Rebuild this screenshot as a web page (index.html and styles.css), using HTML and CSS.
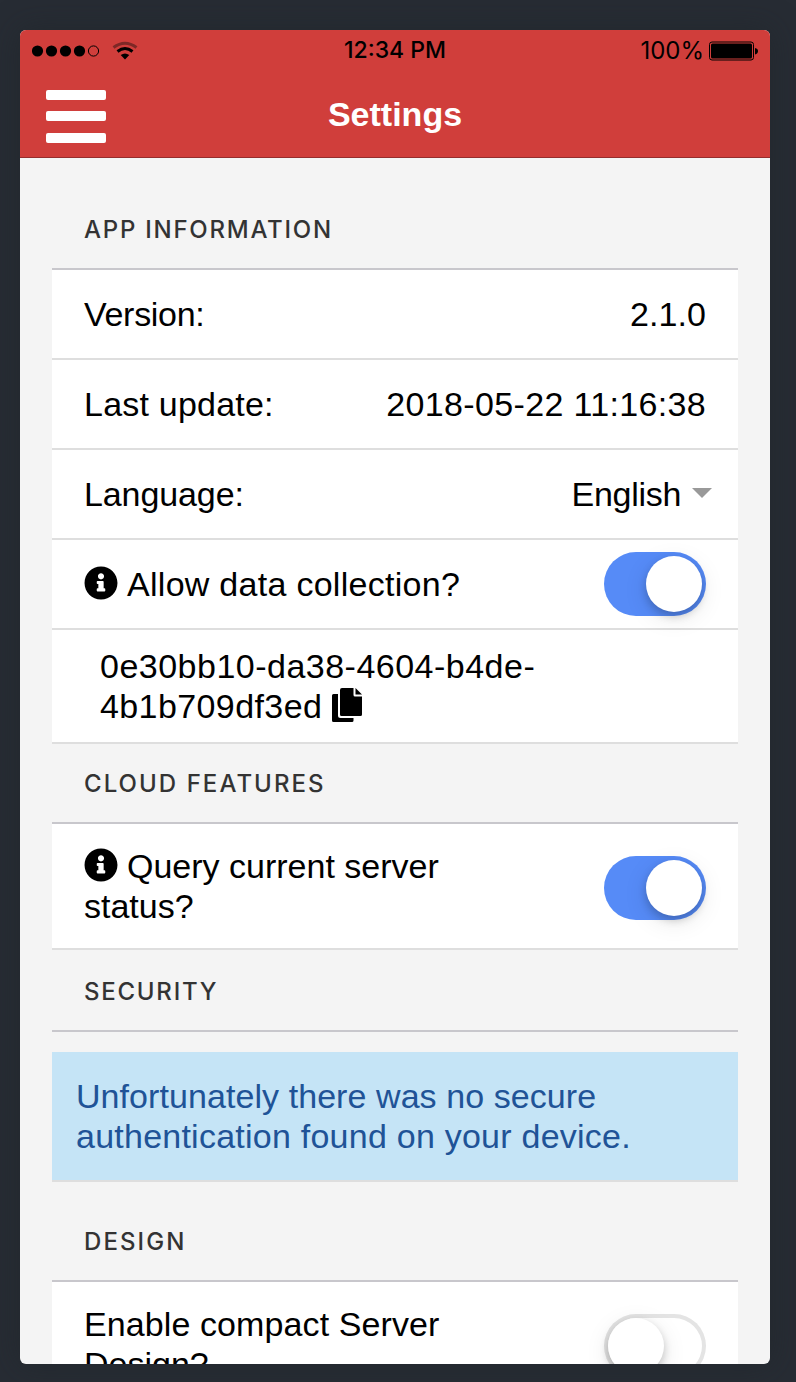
FILE: index.html
```html
<!DOCTYPE html>
<html lang="en">
<head>
<meta charset="utf-8">
<title>Settings</title>
<link rel="stylesheet" href="styles.css">
</head>
<body>
<svg class="defs" width="0" height="0" aria-hidden="true">
  <symbol id="info" viewBox="0 0 512 512"><path fill-rule="evenodd" d="M256 8C119 8 8 119.100 8 256c0 137 111 248 248 248s248-111 248-248C504 119.100 393 8 256 8zm0 102c26 0 46 20 46 46s-20 46-46 46-46-20-46-46 20-46 46-46zm64 262c0 6.600-5.400 12-12 12h-104c-6.600 0-12-5.400-12-12v-24c0-6.600 5.400-12 12-12h12v-64h-12c-6.600 0-12-5.400-12-12v-24c0-6.600 5.400-12 12-12h80c6.600 0 12 5.400 12 12v100h12c6.600 0 12 5.400 12 12z"/></symbol>
</svg>
<main class="phone">
  <header class="topbar">
    <div class="status">
      <svg class="signal" width="110" height="24" viewBox="0 0 110 24">
        <circle cx="5.500" cy="12" r="5.600"/><circle cx="19.500" cy="12" r="5.600"/><circle cx="33.500" cy="12" r="5.600"/><circle cx="47.500" cy="12" r="5.600"/>
        <circle cx="61.500" cy="12" r="5.100" fill="none" stroke="#000"/>
        <path d="M81.500 8.500Q93 0 104.500 8.500" fill="none" stroke="#7d2826" stroke-width="3"/>
        <path d="M85.500 12.500Q93 6.500 100.500 12.500" fill="none" stroke="#000" stroke-width="3"/>
        <path d="M88.700 16Q93 12.800 97.300 16L93 20.500Z"/>
      </svg>
      <span class="time">12:34 PM</span>
      <div class="power">
        <span class="percent">100%</span>
        <svg width="50" height="20" viewBox="0 0 50 20">
          <rect x="0.500" y="1" width="44" height="18" rx="2.500" fill="none" stroke="#000"/>
          <rect x="2" y="2.500" width="41" height="15" rx="1.500"/>
          <path d="M46 7Q49 7.500 49 10T46 13.500Z"/>
        </svg>
      </div>
    </div>
    <div class="nav">
      <div class="burger"><i></i><i></i><i></i></div>
      <h1 class="title">Settings</h1>
    </div>
  </header>
  <div class="content">
    <h2 class="heading first"><span class="h-app">APP INFORMATION</span></h2>
    <section class="group">
      <div class="row"><span class="t-version">Version:</span><span class="t-num">2.1.0</span></div>
      <div class="row"><span class="t-update">Last update:</span><span class="t-date">2018-05-22 11:16:38</span></div>
      <div class="row"><span class="t-lang">Language:</span><span class="select"><span class="t-english">English</span><i class="caret"></i></span></div>
      <div class="row"><span class="t-allow"><svg class="info"><use href="#info"/></svg>Allow data collection?</span><span class="toggle on"><i></i></span></div>
      <div class="row id-row"><span><span class="t-id1">0e30bb10-da38-4604-b4de-</span><br><span class="t-id2">4b1b709df3ed</span><svg class="copy" viewBox="0 0 30 34"><path d="M1.500 6H6V27.500Q6 30 8.500 30H21.500V32.500Q21.500 34 20 34H1.500Q0 34 0 32.500V7.500Q0 6 1.500 6Z"/><path d="M10 0H21.500V7Q21.500 8.500 23 8.500H30V26.500Q30 28 28.500 28H9.500Q8 28 8 26.500V2Q8 0 10 0Z"/><path d="M23.500 0L30 6.500H23.500Z"/></svg></span></div>
    </section>
    <h2 class="heading"><span class="h-cloud">CLOUD FEATURES</span></h2>
    <section class="group">
      <div class="row tall"><span><span class="t-query"><svg class="info"><use href="#info"/></svg>Query current server</span><br><span class="t-status">status?</span></span><span class="toggle on"><i></i></span></div>
    </section>
    <h2 class="heading security"><span class="h-sec">SECURITY</span></h2>
    <section class="group notice-group">
      <p class="notice"><span class="t-n1">Unfortunately there was no secure</span><br><span class="t-n2">authentication found on your device.</span></p>
    </section>
    <h2 class="heading design"><span class="h-design">DESIGN</span></h2>
    <section class="group">
      <div class="row tall last"><span><span class="t-enable">Enable compact Server</span><br><span class="t-design">Design?</span></span><span class="toggle"><i></i></span></div>
    </section>
  </div>
</main>
</body>
</html>
```
FILE: styles.css
```css
* { box-sizing: border-box; }
html, body { height: 1382px; overflow: hidden; }
body {
  margin: 0;
  padding: 30px 26px 18px 20px;
  background: #272c34;
  font-family: "Liberation Sans", Arial, sans-serif;
  color: #000;
}
.defs { position: absolute; }
.phone {
  width: 750px;
  height: 1334px;
  overflow: hidden;
  border-radius: 6px;
  background: #f4f4f4;
  box-shadow: 0 0 30px rgba(30, 35, 37, .5);
}
.topbar {
  height: 128px;
  background: #d03e3b;
  border-bottom: 1px solid #952d2d;
}
.status {
  display: grid;
  grid-template-columns: 1fr auto 1fr;
  align-items: center;
  height: 40px;
  padding: 0 12px 0 12px;
  font: 500 23px Inter, sans-serif;
}
.signal { margin-top: 1px; }
.power { display: flex; justify-content: flex-end; align-items: center; gap: 5px; margin-right: -1px; }
.power svg { margin-top: 1px; }
.percent { font-weight: 400; font-size: 24px; letter-spacing: 0; }
.nav { display: grid; grid-template-columns: 86px 1fr 86px; height: 87px; }
.burger { display: flex; flex-direction: column; gap: 11.3px; padding: 20px 0 0 26px; }
.burger i { width: 60px; height: 10px; border-radius: 2px; background: #fff; }
.title { margin: 24px 0 0; text-align: center; font-size: 34px; line-height: 40px; color: #fff; }
.content { padding: 0 32px; }
.heading {
  height: 80px;
  margin: 0;
  padding: 26px 32px 0;
  border-bottom: 2px solid #c8c7cc;
  font: 500 24px/28px Inter, sans-serif;
  letter-spacing: 1.75px;
  color: #333;
}
.h-cloud { letter-spacing: 2.05px; }
.h-design { letter-spacing: 2.1px; }
.heading.first { height: 112px; padding-top: 58px; }
.heading.security { height: 82px; padding-top: 28px; }
.heading.design { height: 100px; padding-top: 46px; }
.group { background: #fff; }
.row {
  display: flex;
  justify-content: space-between;
  align-items: center;
  height: 90px;
  padding: 0 32px;
  border-bottom: 2px solid #dedede;
  font-size: 34px;
  line-height: 40px;
  white-space: nowrap;
}
.id-row { height: 114px; padding-left: 48px; }
.tall { height: 126px; }
.tall .toggle { margin-top: 4px; }
.last { height: 126px; }
/* per-label tracking */
.t-version { letter-spacing: -.3px; }
.t-num { letter-spacing: .1px; }
.t-update { letter-spacing: .22px; }
.t-date { letter-spacing: .34px; }
.t-lang { letter-spacing: -.1px; }
.t-english { letter-spacing: -.3px; }
.t-allow { letter-spacing: .28px; }
.t-id1 { letter-spacing: .49px; }
.t-id2 { letter-spacing: .4px; }
.t-n1 { letter-spacing: .07px; }
.t-n2 { letter-spacing: .24px; }
.t-enable { letter-spacing: .1px; }
.select { display: flex; align-items: center; gap: 11px; margin-right: -6px; }
.caret { border: 10px solid transparent; border-top-color: #999; border-bottom: 0; margin-top: -2px; }
.info { width: 34px; height: 34px; margin-right: 9px; vertical-align: -4px; }
.copy { width: 30px; height: 34px; margin-left: 10px; vertical-align: -4px; }
.toggle {
  width: 102px;
  height: 64px;
  padding: 4px;
  border-radius: 32px;
  background: #fff;
  box-shadow: inset 0 0 0 4px #e4e4e4;
}
.toggle i {
  display: block;
  width: 56px;
  height: 56px;
  border-radius: 50%;
  background: #fff;
  box-shadow: 0 6px 24px rgba(0, 0, 0, .1), 0 4px 8px rgba(0, 0, 0, .2);
}
.toggle.on { background: #568bf7; box-shadow: none; }
.toggle.on i { margin-left: 38px; }
.notice-group { padding-top: 20px; background: #f4f4f4; }
.notice {
  height: 130px;
  margin: 0;
  padding: 24px;
  border-bottom: 2px solid #dedede;
  background: #c5e4f6;
  color: #205397;
  font-size: 34px;
  line-height: 40px;
  white-space: nowrap;
}
```
